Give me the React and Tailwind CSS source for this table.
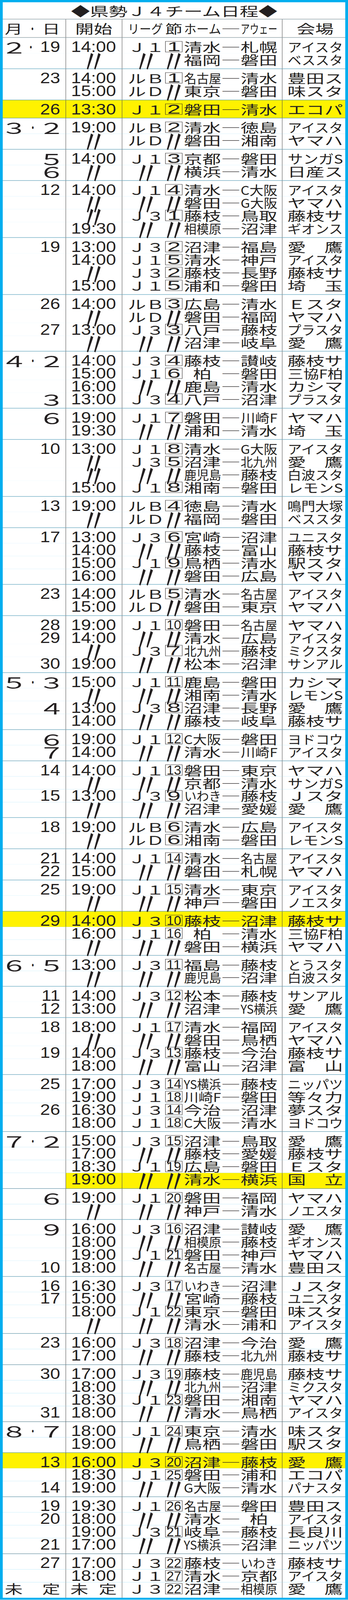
import { useLayoutEffect, useRef, useState } from 'react';

const JP = "font-['Noto_Sans_CJK_JP',sans-serif]";
const NUM = "font-['Liberation_Sans',Arial,sans-serif]";
const D = '〃';
const YEL = 'bg-[#fff200]';

// squeeze / stretch a string horizontally so it fills its box
function Fit({ text, box, max = 1.25, cls = '' }) {
  const ref = useRef(null);
  const [s, setS] = useState(1);
  useLayoutEffect(() => {
    const el = ref.current;
    const run = () => {
      const nat = el.offsetWidth;
      const w = el.parentElement.clientWidth;
      if (nat) setS(Math.min(max, w / nat));
    };
    run();
    if (document.fonts) document.fonts.ready.then(run);
  }, [text, max]);
  return (
    <span className={`flex shrink-0 justify-center ${box}`}>
      <span ref={ref} className={`inline-block whitespace-nowrap ${cls}`} style={{ transform: `scaleX(${s})` }}>
        {text}
      </span>
    </span>
  );
}

function Ditto() {
  return (
    <span className={`${JP} inline-block scale-x-[1.25] scale-y-[2] text-[52px] leading-[40px]`}>〃</span>
  );
}

const fw = (s) => s.replace(/[0-9]/g, (c) => String.fromCharCode(c.charCodeAt(0) + 0xfee0));

function Wide({ c, cls = '' }) {
  return (
    <span className={`flex w-[41px] shrink-0 justify-center ${cls}`}>
      <span className={`${JP} inline-block scale-x-[1.45] text-[48px] leading-[40px]`}>{fw(c)}</span>
    </span>
  );
}

function Num({ v }) {
  return <span className={`${NUM} inline-block text-[46px] leading-[40px]`}>{v}</span>;
}

function Day({ d }) {
  if (d.length === 1) return <Wide c={d} cls="mr-[2px]" />;
  return <Num v={d} />;
}

function DateCell({ v }) {
  if (!v) return null;
  if (v === '未定')
    return (
      <div className="flex w-full items-center justify-between pl-[5px] pr-[14px]">
        <Fit text="未" box="w-[46px]" />
        <Fit text="定" box="w-[46px]" />
      </div>
    );
  if (v.includes('・')) {
    const [m, d] = v.split('・');
    return (
      <div className="flex w-full items-center pl-[8px] pr-[14px]">
        <Wide c={m} />
        <span className="flex flex-1 justify-center">
          <Fit text="・" box="w-[20px]" />
        </span>
        <Day d={d} />
      </div>
    );
  }
  return (
    <div className="flex w-full items-center justify-end pr-[14px]">
      <Day d={v} />
    </div>
  );
}

function TimeCell({ v }) {
  if (v === D)
    return (
      <div className="flex w-full justify-center">
        <Ditto />
      </div>
    );
  if (v === '未定')
    return (
      <div className="flex w-full items-center justify-between pl-[11px] pr-[13px]">
        <Fit text="未" box="w-[46px]" />
        <Fit text="定" box="w-[46px]" />
      </div>
    );
  return (
    <div className="flex w-full justify-end pr-[15px]">
      <Num v={v} />
    </div>
  );
}

function Line({ r, first, last }) {
  const [date, time, lg, rd, home, away, venue, hl] = r;
  const pad = `${first ? 'pt-[8px]' : ''} ${last ? 'pb-[7.8px]' : ''}`;
  const bg = hl ? YEL : 'bg-white';
  const dbg = hl === 'y' ? YEL : 'bg-white';
  return (
    <div className="grid grid-cols-[162px_144px_410px_161px]">
      <div className={`border-r border-[#4a4a4a] ${pad} ${dbg}`}>
        <div className="flex h-[40px] items-center">
          <DateCell v={date} />
        </div>
      </div>
      <div className={`border-r border-[#4a4a4a] ${pad} ${bg}`}>
        <div className="flex h-[40px] items-center">
          <TimeCell v={time} />
        </div>
      </div>
      <div className={`border-r border-[#4a4a4a] ${pad} ${bg}`}>
        <div className="flex h-[40px] items-center pl-[14px]">
          {lg === D ? (
            <span className="flex w-[94px] shrink-0 justify-center">
              <Ditto />
            </span>
          ) : (
            <Fit text={lg} box="w-[94px]" />
          )}
          <span className="ml-[2px] flex w-[44px] shrink-0 justify-center">
            {rd === D ? (
              <Ditto />
            ) : (
              <span className="flex h-[34px] w-[44px] items-center justify-center border border-[#231f20]">
                <Fit text={rd} box="w-[38px]" max={1.55} cls={`${NUM} text-[40px] leading-[32px]`} />
              </span>
            )}
          </span>
          <Fit text={home} box="ml-[4px] w-[95px]" />
          <Fit text="―" box="w-[50px]" max={2} />
          <Fit text={away} box="w-[94px]" />
        </div>
      </div>
      <div className={`${pad} ${bg}`}>
        <div className="flex h-[40px] items-center pl-[13px]">
          <Fit text={venue} box="w-[142px]" />
        </div>
      </div>
    </div>
  );
}

function Group({ rows, last }) {
  return (
    <div className={last ? '' : 'border-b border-[#333]'}>
      {rows.map((r, i) => (
        <Line key={i} r={r} first={i === 0} last={i === rows.length - 1} />
      ))}
    </div>
  );
}

const GROUPS = [
  [
    ['2・19', '14:00', 'Ｊ１', '1', '清水', '札幌', 'アイスタ'],
    ['', D, D, D, '福岡', '磐田', 'ベススタ'],
  ],
  [
    ['23', '14:00', 'ルＢ', '1', '名古屋', '清水', '豊田ス'],
    ['', '15:00', 'ルＤ', D, '東京', '磐田', '味スタ'],
  ],
  [['26', '13:30', 'Ｊ１', '2', '磐田', '清水', 'エコパ', 'y']],
  [
    ['3・2', '19:00', 'ルＢ', '2', '清水', '徳島', 'アイスタ'],
    ['', D, 'ルＤ', D, '磐田', '湘南', 'ヤマハ'],
  ],
  [
    ['5', '14:00', 'Ｊ１', '3', '京都', '磐田', 'サンガS'],
    ['6', D, D, D, '横浜', '清水', '日産ス'],
  ],
  [
    ['12', '14:00', 'Ｊ１', '4', '清水', 'C大阪', 'アイスタ'],
    ['', D, D, D, '磐田', 'G大阪', 'ヤマハ'],
    ['', D, 'Ｊ３', '1', '藤枝', '鳥取', '藤枝サ'],
    ['', '19:30', D, D, '相模原', '沼津', 'ギオンス'],
  ],
  [
    ['19', '13:00', 'Ｊ３', '2', '沼津', '福島', '愛　鷹'],
    ['', '14:00', 'Ｊ１', '5', '清水', '神戸', 'アイスタ'],
    ['', D, 'Ｊ３', '2', '藤枝', '長野', '藤枝サ'],
    ['', '15:00', 'Ｊ１', '5', '浦和', '磐田', '埼　玉'],
  ],
  [
    ['26', '14:00', 'ルＢ', '3', '広島', '清水', 'Ｅスタ'],
    ['', D, 'ルＤ', D, '磐田', '福岡', 'ヤマハ'],
    ['27', '13:00', 'Ｊ３', '3', '八戸', '藤枝', 'プラスタ'],
    ['', D, D, D, '沼津', '岐阜', '愛　鷹'],
  ],
  [
    ['4・2', '14:00', 'Ｊ３', '4', '藤枝', '讃岐', '藤枝サ'],
    ['', '15:00', 'Ｊ１', '6', '柏', '磐田', '三協F柏'],
    ['', '16:00', D, D, '鹿島', '清水', 'カシマ'],
    ['3', '13:00', 'Ｊ３', '4', '八戸', '沼津', 'プラスタ'],
  ],
  [
    ['6', '19:00', 'Ｊ１', '7', '磐田', '川崎F', 'ヤマハ'],
    ['', '19:30', D, D, '浦和', '清水', '埼　玉'],
  ],
  [
    ['10', '13:00', 'Ｊ１', '8', '清水', 'G大阪', 'アイスタ'],
    ['', D, 'Ｊ３', '5', '沼津', '北九州', '愛　鷹'],
    ['', D, D, D, '鹿児島', '藤枝', '白波スタ'],
    ['', '15:00', 'Ｊ１', '8', '湘南', '磐田', 'レモンS'],
  ],
  [
    ['13', '19:00', 'ルＢ', '4', '徳島', '清水', '鳴門大塚'],
    ['', D, 'ルＤ', D, '福岡', '磐田', 'ベススタ'],
  ],
  [
    ['17', '13:00', 'Ｊ３', '6', '宮崎', '沼津', 'ユニスタ'],
    ['', '14:00', D, D, '藤枝', '富山', '藤枝サ'],
    ['', '15:00', 'Ｊ１', '9', '鳥栖', '清水', '駅スタ'],
    ['', '16:00', D, D, '磐田', '広島', 'ヤマハ'],
  ],
  [
    ['23', '14:00', 'ルＢ', '5', '清水', '名古屋', 'アイスタ'],
    ['', '15:00', 'ルＤ', D, '磐田', '東京', 'ヤマハ'],
  ],
  [
    ['28', '19:00', 'Ｊ１', '10', '磐田', '名古屋', 'ヤマハ'],
    ['29', '14:00', D, D, '清水', '広島', 'アイスタ'],
    ['', D, 'Ｊ３', '7', '北九州', '藤枝', 'ミクスタ'],
    ['30', '19:00', D, D, '松本', '沼津', 'サンアル'],
  ],
  [
    ['5・3', '15:00', 'Ｊ１', '11', '鹿島', '磐田', 'カシマ'],
    ['', D, D, D, '湘南', '清水', 'レモンS'],
    ['4', '13:00', 'Ｊ３', '8', '沼津', '長野', '愛　鷹'],
    ['', '14:00', D, D, '藤枝', '岐阜', '藤枝サ'],
  ],
  [
    ['6', '19:00', 'Ｊ１', '12', 'C大阪', '磐田', 'ヨドコウ'],
    ['7', '14:00', D, D, '清水', '川崎F', 'アイスタ'],
  ],
  [
    ['14', '14:00', 'Ｊ１', '13', '磐田', '東京', 'ヤマハ'],
    ['', D, D, D, '京都', '清水', 'サンガS'],
    ['15', '13:00', 'Ｊ３', '9', 'いわき', '藤枝', 'Ｊスタ'],
    ['', D, D, D, '沼津', '愛媛', '愛　鷹'],
  ],
  [
    ['18', '19:00', 'ルＢ', '6', '清水', '広島', 'アイスタ'],
    ['', D, 'ルＤ', '6', '湘南', '磐田', 'レモンS'],
  ],
  [
    ['21', '14:00', 'Ｊ１', '14', '清水', '名古屋', 'アイスタ'],
    ['22', '15:00', D, D, '磐田', '札幌', 'ヤマハ'],
  ],
  [
    ['25', '19:00', 'Ｊ１', '15', '清水', '東京', 'アイスタ'],
    ['', D, D, D, '神戸', '磐田', 'ノエスタ'],
  ],
  [
    ['29', '14:00', 'Ｊ３', '10', '藤枝', '沼津', '藤枝サ', 'y'],
    ['', '16:00', 'Ｊ１', '16', '柏', '清水', '三協F柏'],
    ['', D, D, D, '磐田', '横浜', 'ヤマハ'],
  ],
  [
    ['6・5', '13:00', 'Ｊ３', '11', '福島', '藤枝', 'とうスタ'],
    ['', D, D, D, '鹿児島', '沼津', '白波スタ'],
  ],
  [
    ['11', '14:00', 'Ｊ３', '12', '松本', '藤枝', 'サンアル'],
    ['12', '13:00', D, D, '沼津', 'YS横浜', '愛　鷹'],
  ],
  [
    ['18', '18:00', 'Ｊ１', '17', '清水', '福岡', 'アイスタ'],
    ['', D, D, D, '磐田', '鳥栖', 'ヤマハ'],
    ['19', '14:00', 'Ｊ３', '13', '藤枝', '今治', '藤枝サ'],
    ['', '18:00', D, D, '富山', '沼津', '富　山'],
  ],
  [
    ['25', '17:00', 'Ｊ３', '14', 'YS横浜', '藤枝', 'ニッパツ'],
    ['', '19:00', 'Ｊ１', '18', '川崎F', '磐田', '等々力'],
    ['26', '16:30', 'Ｊ３', '14', '今治', '沼津', '夢スタ'],
    ['', '18:00', 'Ｊ１', '18', 'C大阪', '清水', 'ヨドコウ'],
  ],
  [
    ['7・2', '15:00', 'Ｊ３', '15', '沼津', '鳥取', '愛　鷹'],
    ['', '17:00', D, D, '藤枝', '愛媛', '藤枝サ'],
    ['', '18:30', 'Ｊ１', '19', '広島', '磐田', 'Ｅスタ'],
    ['', '19:00', D, D, '清水', '横浜', '国　立', 'c'],
  ],
  [
    ['6', '19:00', 'Ｊ１', '20', '磐田', '福岡', 'ヤマハ'],
    ['', D, D, D, '神戸', '清水', 'ノエスタ'],
  ],
  [
    ['9', '16:00', 'Ｊ３', '16', '沼津', '讃岐', '愛　鷹'],
    ['', '18:00', D, D, '相模原', '藤枝', 'ギオンス'],
    ['', '19:00', 'Ｊ１', '21', '磐田', '神戸', 'ヤマハ'],
    ['10', '18:00', D, D, '名古屋', '清水', '豊田ス'],
  ],
  [
    ['16', '16:30', 'Ｊ３', '17', 'いわき', '沼津', 'Ｊスタ'],
    ['17', '15:00', D, D, '宮崎', '藤枝', 'ユニスタ'],
    ['', '18:00', 'Ｊ１', '22', '東京', '磐田', '味スタ'],
    ['', D, D, D, '清水', '浦和', 'アイスタ'],
  ],
  [
    ['23', '16:00', 'Ｊ３', '18', '沼津', '今治', '愛　鷹'],
    ['', '17:00', D, D, '藤枝', '北九州', '藤枝サ'],
  ],
  [
    ['30', '17:00', 'Ｊ３', '19', '藤枝', '鹿児島', '藤枝サ'],
    ['', '18:00', D, D, '北九州', '沼津', 'ミクスタ'],
    ['', '18:30', 'Ｊ１', '23', '磐田', '湘南', 'ヤマハ'],
    ['31', '18:00', D, D, '清水', '鳥栖', 'アイスタ'],
  ],
  [
    ['8・7', '18:00', 'Ｊ１', '24', '東京', '清水', '味スタ'],
    ['', '19:00', D, D, '鳥栖', '磐田', '駅スタ'],
  ],
  [
    ['13', '16:00', 'Ｊ３', '20', '沼津', '藤枝', '愛　鷹', 'y'],
    ['', '18:30', 'Ｊ１', '25', '磐田', '浦和', 'エコパ'],
    ['14', '19:00', D, D, 'G大阪', '清水', 'パナスタ'],
  ],
  [
    ['19', '19:30', 'Ｊ１', '26', '名古屋', '磐田', '豊田ス'],
    ['20', '18:00', D, D, '清水', '柏', 'アイスタ'],
    ['', '19:00', 'Ｊ３', '21', '岐阜', '藤枝', '長良川'],
    ['21', '17:00', D, D, 'YS横浜', '沼津', 'ニッパツ'],
  ],
  [
    ['27', '17:00', 'Ｊ３', '22', '藤枝', 'いわき', '藤枝サ'],
    ['', '18:00', 'Ｊ１', '27', '清水', '京都', 'アイスタ'],
    ['未定', '未定', 'Ｊ３', '22', '沼津', '相模原', '愛　鷹'],
  ],
];

export default function App() {
  // the browser only photographs 4096px of height, so the 4968px table is squeezed vertically to fit
  return (
    <div className="h-[4096px] w-[891px] overflow-hidden">
      <div
        className={`w-[891px] origin-top scale-y-[0.82448] bg-[#00aeef] px-[7px] pt-[7px] pb-[6.2px] text-[38px] leading-none text-[#231f20] ${JP}`}
      >
        <div className="flex h-[53px] items-center justify-center border-b border-[#333] bg-white">
          <Fit text="◆県勢Ｊ４チーム日程◆" box="w-[528px]" max={1.4} cls="text-[39px]" />
        </div>

        <div className="grid h-[57px] grid-cols-[162px_144px_410px_161px] border-b border-[#333] bg-white">
          <div className="flex items-center justify-between border-r border-[#4a4a4a] pl-[5px] pr-[14px]">
            <Fit text="月" box="w-[46px]" />
            <Fit text="・" box="w-[20px]" />
            <Fit text="日" box="w-[46px]" />
          </div>
          <div className="flex items-center justify-center border-r border-[#4a4a4a]">
            <Fit text="開始" box="w-[95px]" />
          </div>
          <div className="flex items-center border-r border-[#4a4a4a] pl-[14px]">
            <Fit text="リーグ" box="w-[90px]" />
            <Fit text="節" box="ml-[6px] w-[44px]" />
            <Fit text="ホーム" box="ml-[4px] w-[95px]" />
            <Fit text="―" box="w-[50px]" max={2} />
            <Fit text="アウェー" box="w-[94px]" />
          </div>
          <div className="flex items-center pl-[13px]">
            <Fit text="会場" box="w-[142px]" />
          </div>
        </div>

        {GROUPS.map((g, i) => (
          <Group key={i} rows={g} last={i === GROUPS.length - 1} />
        ))}
      </div>
    </div>
  );
}
